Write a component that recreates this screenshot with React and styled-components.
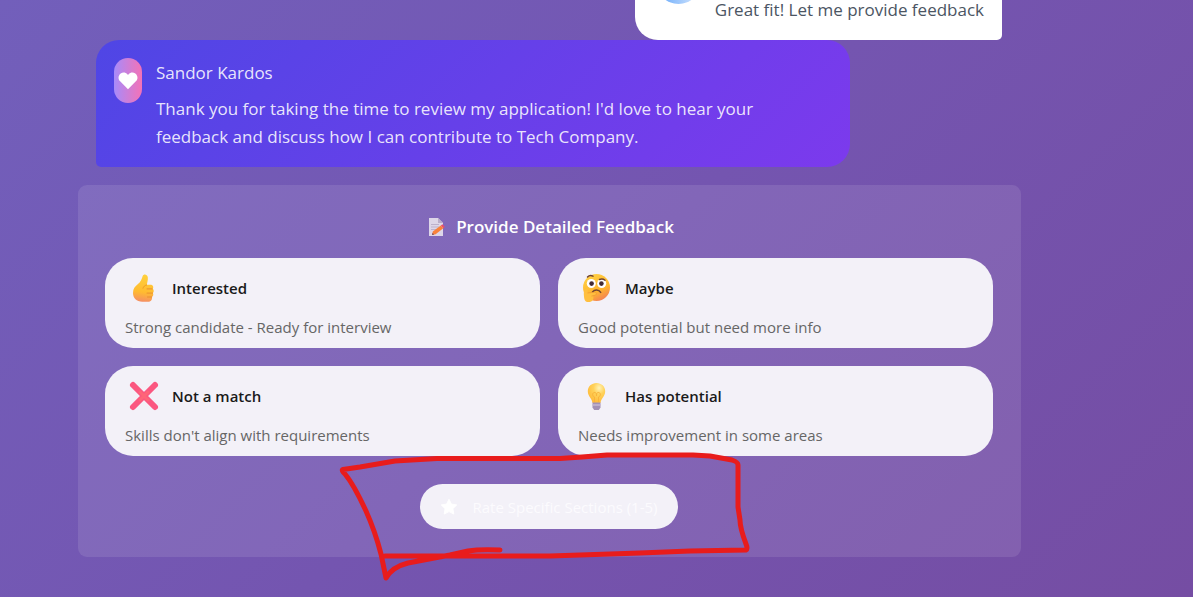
import React from 'react';
import styled, { createGlobalStyle, css } from 'styled-components';

const GlobalStyle = createGlobalStyle`
  *, *::before, *::after { box-sizing: border-box; }
  body {
    margin: 0;
    font-family: "Open Sans", "Noto Sans", sans-serif;
    font-size: 17px;
    line-height: 28px;
  }
  p, h2 { margin: 0; }
  button { font: inherit; cursor: pointer; }
`;

const Page = styled.main`
  min-height: 100vh;
  padding: 0 172px 40px 78px;
  overflow: hidden;
  background: linear-gradient(135deg, #725fbb 0%, #7455b0 50%, #754da3 100%);
`;

const Feed = styled.div`
  display: flex;
  flex-direction: column;
  margin-top: -60px;
`;

const Bubble = styled.article`
  display: flex;
  gap: 14px;
  padding: 18px 18px 16px;
  ${({ $own }) =>
    $own
      ? css`
          align-self: flex-end;
          align-items: flex-end;
          height: 100px;
          margin-right: 19px;
          padding-left: 21px;
          background: #fff;
          color: #4b5563;
          border-radius: 23px 23px 5px 23px;
        `
      : css`
          align-self: flex-start;
          width: 80%;
          margin-left: 18px;
          background: linear-gradient(135deg, #4f46e5, #7c3aed);
          color: rgba(255, 255, 255, 0.87);
          border-radius: 23px 23px 23px 5px;
        `}
`;

const Avatar = styled.span`
  display: flex;
  flex: none;
  align-items: center;
  justify-content: center;
  width: ${({ $wide }) => ($wide ? 45 : 28)}px;
  height: 45px;
  border-radius: 23px;
  color: #fff;
  background: ${({ $wide }) =>
    $wide
      ? 'linear-gradient(90deg, #60a5fa, #dbeafe)'
      : 'linear-gradient(90deg, #a78bfa, #f472b6)'};
  ${({ $wide }) => $wide && 'margin-bottom: 20px;'}
`;

const Message = styled.div`
  display: flex;
  flex-direction: column;
  gap: 8px;
  min-width: 0;
  max-width: 640px;
  ${({ $inset }) => $inset && 'padding-top: 1px;'}
`;

const Panel = styled.section`
  margin-top: 18px;
  padding: 28px 28px 28px 27px;
  border-radius: 9px;
  background: rgba(255, 255, 255, 0.1);
`;

const PanelTitle = styled.h2`
  display: flex;
  align-items: center;
  justify-content: center;
  gap: 10px;
  margin-bottom: 17px;
  padding-left: 4px;
  color: #fff;
  font-size: 17px;
  font-weight: 600;
  line-height: 28px;
`;

const Options = styled.div`
  display: grid;
  grid-template-columns: 1fr 1fr;
  gap: 18px;
`;

const OptionCard = styled.button`
  display: flex;
  flex-direction: column;
  gap: 10px;
  padding: 12px 20px 10px;
  border: 0;
  border-radius: 28px;
  background: #f3f1f8;
  text-align: left;
`;

const OptionHead = styled.span`
  display: flex;
  align-items: center;
  gap: 11px;
  color: #1a1a1a;
  font-size: 15px;
  font-weight: 600;
  line-height: 36px;
`;

const OptionText = styled.span`
  color: #666;
  font-size: 15px;
  line-height: 22px;
`;

const RateArea = styled.div`
  position: relative;
  display: flex;
  justify-content: center;
  margin-top: 28px;
`;

const RateButton = styled.button`
  display: flex;
  align-items: center;
  gap: 14px;
  height: 45px;
  padding: 0 20px;
  border: 0;
  border-radius: 23px;
  background: #f3f1f8;
  color: #fcfbfe;
  font-size: 15px;
`;

const Scribble = styled.svg`
  position: absolute;
  top: -39px;
  left: 50%;
  margin-left: -219px;
  pointer-events: none;
`;

const Heart = () => (
  <svg width="20" height="18" viewBox="0 0 20 18" fill="currentColor" aria-hidden="true">
    <path d="M10 17.3 1.9 9.1C-.2 6.900.2 3.300 2.700 1.500 4.900 0 7.700.4 9.400 2.300L10 3l.6-.7C12.300.4 15.100 0 17.300 1.500c2.500 1.800 2.900 5.400.8 7.600z" />
  </svg>
);

const Star = () => (
  <svg width="18" height="18" viewBox="0 0 18 18" fill="#fff" stroke="#fff" strokeLinejoin="round" aria-hidden="true">
    <path d="m9 1.200 2.400 4.900 5.400.8-3.900 3.800.9 5.400L9 13.600l-4.800 2.500.9-5.400L1.200 6.900l5.400-.8z" />
  </svg>
);

const Memo = () => (
  <svg width="18" height="20" viewBox="0 0 18 20" aria-hidden="true">
    <path d="M1 1h9l5 5v13H1z" fill="#ddd6e8" />
    <path d="M10 1v5h5z" fill="#b9adc9" />
    <path d="M3 7.500h8M3 10h8M3 12.500h5" stroke="#bdb1cb" />
    <path d="m4 18 .8-3.500 8-6 2.500 2.800-7.700 6z" fill="#f9823b" />
    <path d="m12.800 8.500 1.700-1.200 2.300 2.600-1.500 1.400z" fill="#e8506c" />
    <path d="m4 18 .5-2 1.700 1.500z" fill="#6d4b63" />
  </svg>
);

const ThumbsUp = () => (
  <svg width="36" height="36" viewBox="0 0 36 36" aria-hidden="true">
    <defs>
      <linearGradient id="thumb" x1="0.6" y1="0" x2="0.5" y2="1">
        <stop offset="0" stopColor="#ffd13d" />
        <stop offset="0.65" stopColor="#ffbb30" />
        <stop offset="1" stopColor="#f58f64" />
      </linearGradient>
    </defs>
    <path d="M17.700 6c.8-2.300 4.500-2.100 5.100 1.200.4 2.500-.7 5.100-.9 7.600h3.600c2.500 0 3.500 2.500 2.200 4 1.500 1.200 1.200 3.500.1 4.300.9 1.400.5 3-.8 3.800.4 2.900-1.200 4.900-4 4.900h-5.700C11.500 31.800 8 28 8 23c0-4.300 2-6.600 4.700-8.700 3-2.500 4-5 5-8.300z" fill="url(#thumb)" />
    <path d="M27.200 18.900H22m5.600 4.200H22m4.700 3.900H22.500" fill="none" stroke="#e99031" strokeWidth="1" strokeLinecap="round" />
    <path d="M21.600 15c-1.800.3-3.200 1.600-3.600 3.200" fill="none" stroke="#ee9a26" strokeLinecap="round" />
  </svg>
);

const Thinking = () => (
  <svg width="36" height="36" viewBox="0 0 36 36" aria-hidden="true">
    <defs>
      <linearGradient id="face" x1="0.3" y1="0" x2="0.8" y2="1">
        <stop offset="0" stopColor="#ffd045" />
        <stop offset="0.6" stopColor="#ffb52e" />
        <stop offset="1" stopColor="#f1785d" />
      </linearGradient>
    </defs>
    <circle cx="18.500" cy="17.500" r="13.500" fill="url(#face)" />
    <circle cx="13.300" cy="13.500" r="4.500" fill="#fff" />
    <circle cx="23.700" cy="13.500" r="4.500" fill="#fff" />
    <circle cx="13.600" cy="13.600" r="2.300" fill="#422b35" />
    <circle cx="23.400" cy="13.600" r="2.300" fill="#422b35" />
    <path d="M9.500 7c1.500-1.500 3.700-1.700 5.500-.8M21.500 9.500c2-.8 4-.5 5.500.8M14.500 22c2-2.700 6.200-2.800 8.200.4" fill="none" stroke="#704331" strokeWidth="1.500" strokeLinecap="round" />
    <path d="M6 26.500c-.5-3.500 0-6.300 1.400-7.500 1.500-.8 2.600.4 2.300 2.200l-.2 1.800 7-.8c2-.2 2.600 2.500.7 3l-2.200.6c1.300 3.700-.5 6.300-4.500 6.300-3.400 0-4.200-2.200-4.500-5.600z" fill="#ffbf3f" />
    <path d="m9.500 23 7-.8c2-.2 2.600 2.500.7 3l-3.700.9" fill="none" stroke="#ed9835" strokeWidth=".8" />
  </svg>
);

const Cross = () => (
  <svg width="36" height="36" viewBox="0 0 36 36" aria-hidden="true">
    <path d="m8 7 22 22M30 7 8 29" stroke="#fb5780" strokeWidth="6" strokeLinecap="round" />
    <path d="m15 14 8 8m0-8-8 8" stroke="#ff6577" strokeWidth="3" strokeLinecap="round" />
  </svg>
);

const Bulb = () => (
  <svg width="36" height="36" viewBox="0 0 36 36" aria-hidden="true">
    <defs>
      <radialGradient id="glass" cx=".65" cy=".25" r=".8">
        <stop offset="0" stopColor="#fff3b5" />
        <stop offset=".4" stopColor="#ffd25a" />
        <stop offset="1" stopColor="#ffb837" />
      </radialGradient>
    </defs>
    <path d="M18.500 5c5 0 8.700 3.600 8.700 8.200 0 5.300-4.100 6.500-4.700 11.800h-8C13.900 19.700 9.800 18.500 9.800 13.200 9.800 8.600 13.500 5 18.500 5z" fill="url(#glass)" />
    <path d="M16.500 24v-5c-2-.5-2.800-3.800-.3-4.500 2-.5 2.300 1.500 2.300 3.500 0-2 .3-4 2.300-3.500 2.500.7 1.700 4-.3 4.500v5" fill="none" stroke="#f9b33b" />
    <path d="M14.500 24.500h8v5l-1.700 2.500h-4.600l-1.700-2.500z" fill="#a391b5" />
    <path d="M14.500 27h8" stroke="#c5b7d2" strokeWidth="1.500" />
  </svg>
);

const options = [
  { icon: ThumbsUp, title: 'Interested', text: 'Strong candidate - Ready for interview' },
  { icon: Thinking, title: 'Maybe', text: 'Good potential but need more info' },
  { icon: Cross, title: 'Not a match', text: "Skills don't align with requirements" },
  { icon: Bulb, title: 'Has potential', text: 'Needs improvement in some areas' },
];

export default function App() {
  return (
    <>
      <GlobalStyle />
      <Page>
        <Feed>
          <Bubble $own>
            <Avatar $wide />
            <Message>
              <p>Great fit! Let me provide feedback</p>
            </Message>
          </Bubble>
          <Bubble>
            <Avatar>
              <Heart />
            </Avatar>
            <Message $inset>
              <p>Sandor Kardos</p>
              <p>
                Thank you for taking the time to review my application! I'd love to hear your
                feedback and discuss how I can contribute to Tech Company.
              </p>
            </Message>
          </Bubble>
          <Panel>
            <PanelTitle>
              <Memo />
              Provide Detailed Feedback
            </PanelTitle>
            <Options>
              {options.map(({ icon: Icon, title, text }) => (
                <OptionCard key={title} type="button">
                  <OptionHead>
                    <Icon />
                    {title}
                  </OptionHead>
                  <OptionText>{text}</OptionText>
                </OptionCard>
              ))}
            </Options>
            <RateArea>
              <RateButton type="button">
                <Star />
                Rate Specific Sections (1-5)
              </RateButton>
              <Scribble width="430" height="145" viewBox="0 0 430 145" fill="none" stroke="#e81c1c" strokeWidth="5" strokeLinecap="round" strokeLinejoin="round" aria-hidden="true">
                <path d="M55 111H220L310 108L360 106L416 105Q418 104 416 99Q410 83 410 75L408 62V20Q408 17 402 15L380 11L363 10H277L252 12L230 13.500H107L65 16L30 22L13 24.500Q11 25 15 29Q24 40 36 66Q45 86 51 109L56 133Q62 122 78 118L120 110L138 106Q150 104 170 105" />
              </Scribble>
            </RateArea>
          </Panel>
        </Feed>
      </Page>
    </>
  );
}
